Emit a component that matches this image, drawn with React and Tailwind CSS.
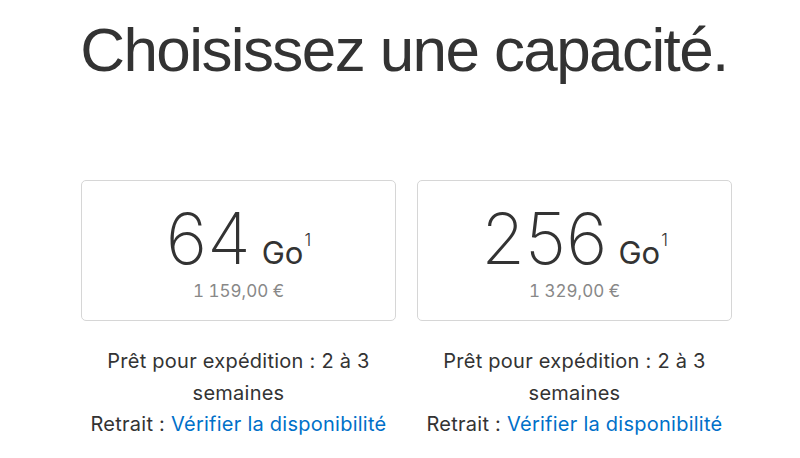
import React from 'react';

const options = [
  { size: '64', price: '1 159,00 €' },
  { size: '256', price: '1 329,00 €' },
];

const CapacityCard = ({ size, price }) => {
  return (
    <div className="flex w-[315px] flex-col items-center">
      <div className="flex h-[141px] w-full flex-col items-center rounded-[5px] border border-[#d6d6d6] bg-white">
        <div className="mt-[19px] flex items-baseline text-[#333]">
          <span className="text-[71px] font-extralight leading-[76px]">{size}</span>
          <span className="ml-[11px] text-[31px] leading-none">Go</span>
          <sup className="relative -top-[18px] ml-[1px] text-[17px] font-light leading-none">1</sup>
        </div>
        <div className="mt-[4px] text-[17px] leading-[22px] tabular-nums text-[#888]">
          {price}
        </div>
      </div>
      <div className="mt-[25px] w-full text-center text-[20px] leading-[31.5px] tracking-[0.25px] text-[#333]">
        <p className="px-[22px]">Prêt pour expédition : 2 à 3 semaines</p>
        <p>
          Retrait :{' '}
          <a href="#" className="text-[#0070c9]">
            Vérifier la disponibilité
          </a>
        </p>
      </div>
    </div>
  );
};

const App = () => {
  return (
    <div
      className="min-h-screen bg-white"
      style={{ fontFamily: 'Inter, "Liberation Sans", sans-serif' }}
    >
      <h1
        className="pl-[8px] pt-[14px] text-center text-[62px] leading-[72px] tracking-[-1.6px] text-[#333]"
        style={{ fontFamily: '"Liberation Sans", Arial, sans-serif' }}
      >
        Choisissez une capacité.
      </h1>
      <div className="mt-[94px] flex justify-center gap-[21px] pl-[13px]">
        {options.map((o) => (
          <CapacityCard key={o.size} size={o.size} price={o.price} />
        ))}
      </div>
    </div>
  );
};

export default App;
